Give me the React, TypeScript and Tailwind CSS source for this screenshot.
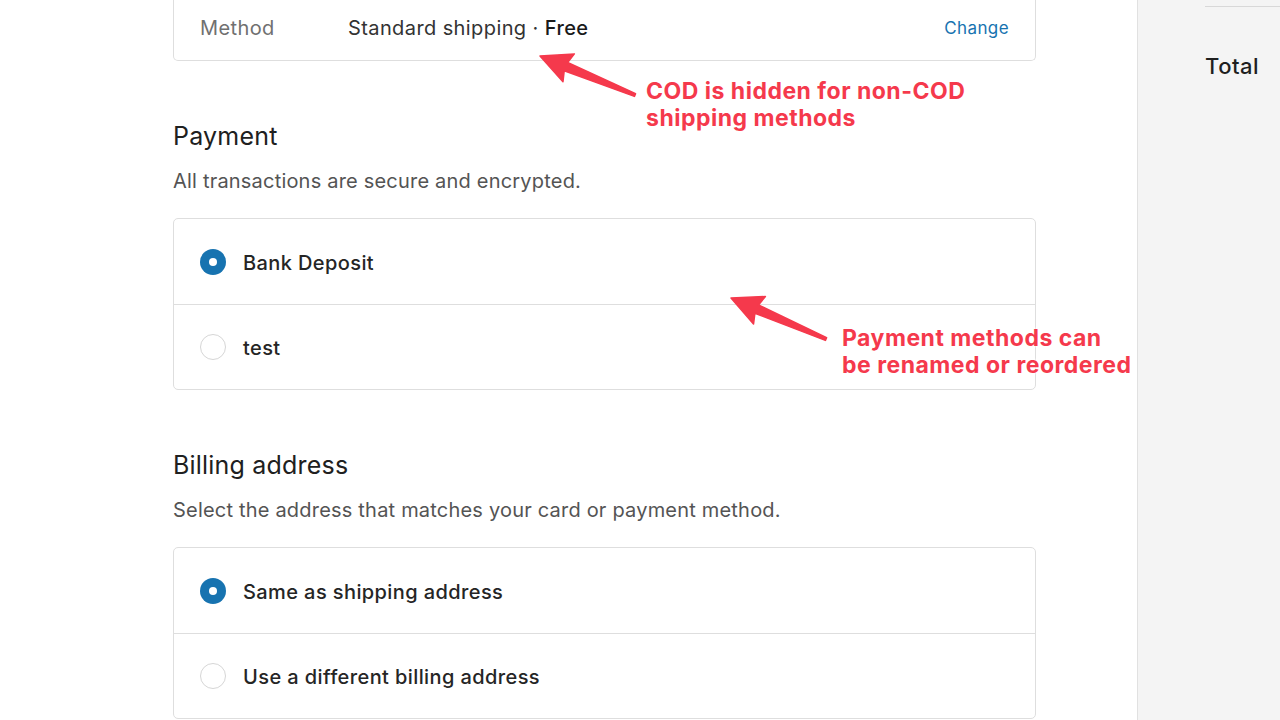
import type { ReactNode } from "react";

const font = { fontFamily: "Inter, 'Noto Sans', sans-serif" };

function Radio({ checked }: { checked?: boolean }) {
  return checked ? (
    <span className="flex h-[26px] w-[26px] shrink-0 items-center justify-center rounded-full bg-[#1773b0]">
      <span className="h-[8px] w-[8px] rounded-full bg-white" />
    </span>
  ) : (
    <span className="h-[26px] w-[26px] shrink-0 rounded-full border border-[#d6d6d6] bg-white" />
  );
}

function OptionBox({ options }: { options: { label: string; checked?: boolean }[] }) {
  return (
    <div className="rounded-[5px] border border-[#dedede]">
      {options.map((o, i) => (
        <div
          key={o.label}
          className={`flex h-[85px] items-center gap-[17px] px-[26px] ${i > 0 ? "border-t border-[#dedede]" : ""}`}
        >
          <Radio checked={o.checked} />
          <span className="pt-[2px] text-[20px] font-medium tracking-[0.4px] text-[#252525]">{o.label}</span>
        </div>
      ))}
    </div>
  );
}

function Section({ title, sub, children }: { title: string; sub: string; children: ReactNode }) {
  return (
    <section className="mt-[60px]">
      <h2 className="text-[25px] leading-[30px] tracking-[0.2px] text-[#202020]">{title}</h2>
      <p className="mt-[17px] text-[20px] leading-[26px] tracking-[0.2px] text-[#545454]">{sub}</p>
      <div className="mt-[24px]">{children}</div>
    </section>
  );
}

function Arrow({ from, to }: { from: [number, number]; to: [number, number] }) {
  const [x1, y1] = from;
  const [x2, y2] = to;
  const len = Math.hypot(x2 - x1, y2 - y1);
  const ux = (x2 - x1) / len;
  const uy = (y2 - y1) / len;
  const nx = -uy;
  const ny = ux;
  const head = 31;
  const hw = 15;
  const bx = x2 - ux * head;
  const by = y2 - uy * head;
  const neck = 4.5;
  const tail = 1.5;
  const pts = [
    [x1 + nx * tail, y1 + ny * tail],
    [bx + ux * 3 + nx * neck, by + uy * 3 + ny * neck],
    [bx + nx * hw, by + ny * hw],
    [x2, y2],
    [bx - nx * hw, by - ny * hw],
    [bx + ux * 3 - nx * neck, by + uy * 3 - ny * neck],
    [x1 - nx * tail, y1 - ny * tail],
  ]
    .map((p) => p.join(","))
    .join(" ");
  return <polygon points={pts} fill="#f5394c" stroke="#f5394c" strokeWidth="1.5" strokeLinejoin="round" />;
}

export default function App() {
  return (
    <div className="relative flex h-[720px] w-[1280px] overflow-hidden bg-white" style={font}>
      <main className="flex-1 pl-[173px] pr-[101px]">
        <div className="rounded-b-[5px] border-x border-b border-[#dedede]">
          <div className="flex h-[56px] items-center pl-[26px] pr-[26px] text-[20px] tracking-[0.4px]">
            <span className="w-[148px] text-[#707070]">Method</span>
            <span className="flex-1 text-[#333]">
              Standard shipping · <span className="font-medium text-[#1a1a1a]">Free</span>
            </span>
            <span className="pt-[1px] text-[17px] tracking-[0.4px] text-[#1773b0]">Change</span>
          </div>
          <div className="h-[4px]" />
        </div>

        <Section title="Payment" sub="All transactions are secure and encrypted.">
          <OptionBox options={[{ label: "Bank Deposit", checked: true }, { label: "test" }]} />
        </Section>

        <Section title="Billing address" sub="Select the address that matches your card or payment method.">
          <OptionBox
            options={[{ label: "Same as shipping address", checked: true }, { label: "Use a different billing address" }]}
          />
        </Section>
      </main>

      <aside className="w-[143px] border-l border-[#e1e1e1] bg-[#f4f4f4] pl-[67px]">
        <div className="mt-[6px] border-t border-[#d8d8d8]" />
        <div className="mt-[45px] text-[22px] font-medium leading-[28px] tracking-[0.5px] text-[#1f1f1f]">Total</div>
      </aside>

      <svg className="pointer-events-none absolute inset-0" width="1280" height="720">
        <Arrow from={[635, 95]} to={[540, 56]} />
        <Arrow from={[826, 339]} to={[731, 298]} />
      </svg>

      <div
        className="absolute left-[646px] top-[78px] text-[23px] font-bold leading-[27px] tracking-[0.5px] text-[#f5394c]"
        style={{ textShadow: "0 0 3px #fff, 0 0 3px #fff" }}
      >
        COD is hidden for non-COD
        <br />
        shipping methods
      </div>
      <div
        className="absolute left-[842px] top-[325px] text-[23px] font-bold leading-[27px] tracking-[0.5px] text-[#f5394c]"
        style={{ textShadow: "0 0 3px #fff, 0 0 3px #fff" }}
      >
        Payment methods can
        <br />
        be renamed or reordered
      </div>
    </div>
  );
}
